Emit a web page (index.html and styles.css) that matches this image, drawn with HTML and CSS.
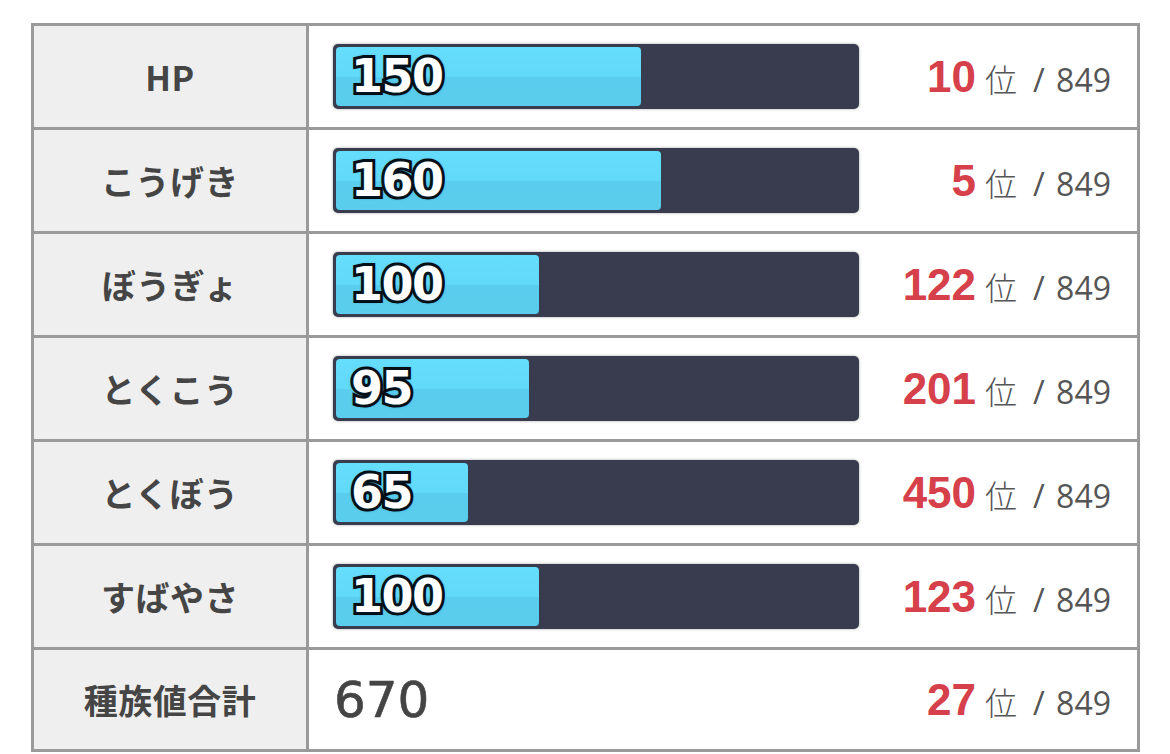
FILE: index.html
```html
<!DOCTYPE html>
<html lang="ja">
<head>
<meta charset="utf-8">
<link rel="stylesheet" href="styles.css">
</head>
<body>
<div class="stats">
  <div class="row">
    <div class="label">HP</div>
    <div class="cell">
      <div class="bar"><div class="fill" style="width:305px"></div><span class="num">150</span></div>
      <div class="rank"><span class="pos">10</span><span class="i">位</span><span class="total">/ 849</span></div>
    </div>
  </div>
  <div class="row">
    <div class="label">こうげき</div>
    <div class="cell">
      <div class="bar"><div class="fill" style="width:325px"></div><span class="num">160</span></div>
      <div class="rank"><span class="pos">5</span><span class="i">位</span><span class="total">/ 849</span></div>
    </div>
  </div>
  <div class="row">
    <div class="label">ぼうぎょ</div>
    <div class="cell">
      <div class="bar"><div class="fill" style="width:203px"></div><span class="num">100</span></div>
      <div class="rank"><span class="pos">122</span><span class="i">位</span><span class="total">/ 849</span></div>
    </div>
  </div>
  <div class="row">
    <div class="label">とくこう</div>
    <div class="cell">
      <div class="bar"><div class="fill" style="width:193px"></div><span class="num">95</span></div>
      <div class="rank"><span class="pos">201</span><span class="i">位</span><span class="total">/ 849</span></div>
    </div>
  </div>
  <div class="row">
    <div class="label">とくぼう</div>
    <div class="cell">
      <div class="bar"><div class="fill" style="width:132px"></div><span class="num">65</span></div>
      <div class="rank"><span class="pos">450</span><span class="i">位</span><span class="total">/ 849</span></div>
    </div>
  </div>
  <div class="row">
    <div class="label">すばやさ</div>
    <div class="cell">
      <div class="bar"><div class="fill" style="width:203px"></div><span class="num">100</span></div>
      <div class="rank"><span class="pos">123</span><span class="i">位</span><span class="total">/ 849</span></div>
    </div>
  </div>
  <div class="row">
    <div class="label">種族値合計</div>
    <div class="cell">
      <div class="sum">670</div>
      <div class="rank"><span class="pos">27</span><span class="i">位</span><span class="total">/ 849</span></div>
    </div>
  </div>
</div>
</body>
</html>
```
FILE: styles.css
```css
html, body {
  margin: 0;
  padding: 0;
  background: #fff;
}
body {
  font-family: "Noto Sans CJK JP", "Liberation Sans", sans-serif;
  color: #444;
}
.stats {
  margin: 23px 0 0 31px;
  width: 1103px;
  border: 3px solid #9a9a9a;
  border-bottom: none;
}
.row {
  display: flex;
  height: 101px;
  border-bottom: 3px solid #9a9a9a;
}
.row:last-child {
  height: 99px;
}
.label {
  width: 272px;
  flex: none;
  background: #efefef;
  border-right: 3px solid #9a9a9a;
  display: flex;
  align-items: center;
  justify-content: center;
  font-size: 34px;
  font-weight: 700;
  color: #454545;
  letter-spacing: 0.5px;
}
.cell {
  flex: 1;
  display: flex;
  align-items: center;
  padding: 0 26px 0 24px;
}
.bar {
  position: relative;
  width: 520px;
  height: 59px;
  padding: 3px;
  background: #393c4f;
  border-radius: 5px;
  box-shadow: 0 0 3px rgba(0, 0, 0, 0.35);
  margin-top: -1px;
}
.fill {
  height: 100%;
  border-radius: 4px;
  background: linear-gradient(to bottom, #65ddfc 0%, #62d9f9 50%, #5acdee 52%, #5accec 100%);
}
.num {
  position: absolute;
  left: 18px;
  top: 50%;
  transform: translateY(-50%);
  font-family: "DejaVu Sans", sans-serif;
  font-weight: 700;
  font-style: normal;
  font-size: 46px;
  line-height: 1;
  color: #fff;
  -webkit-text-stroke: 6px #050a10;
  paint-order: stroke fill;
  text-shadow: 0 0 4px rgba(0, 40, 60, 0.9);
  letter-spacing: -1.5px;
}
.sum {
  font-family: "DejaVu Sans", sans-serif;
  font-size: 50px;
  color: #444;
  margin-left: 1px;
  -webkit-text-stroke: 0.6px #444;
}
.rank {
  margin-left: auto;
  display: flex;
  align-items: baseline;
  white-space: nowrap;
}
.pos {
  font-family: "Liberation Sans", sans-serif;
  font-weight: 700;
  font-size: 44px;
  color: #d6404a;
}
.i {
  font-family: "Noto Sans CJK JP", sans-serif;
  font-weight: 300;
  font-size: 32px;
  color: #555;
  margin-left: 9px;
}
.total {
  font-family: "Open Sans", sans-serif;
  font-size: 32px;
  color: #555;
  margin-left: 16px;
  word-spacing: 3px;
}
```
